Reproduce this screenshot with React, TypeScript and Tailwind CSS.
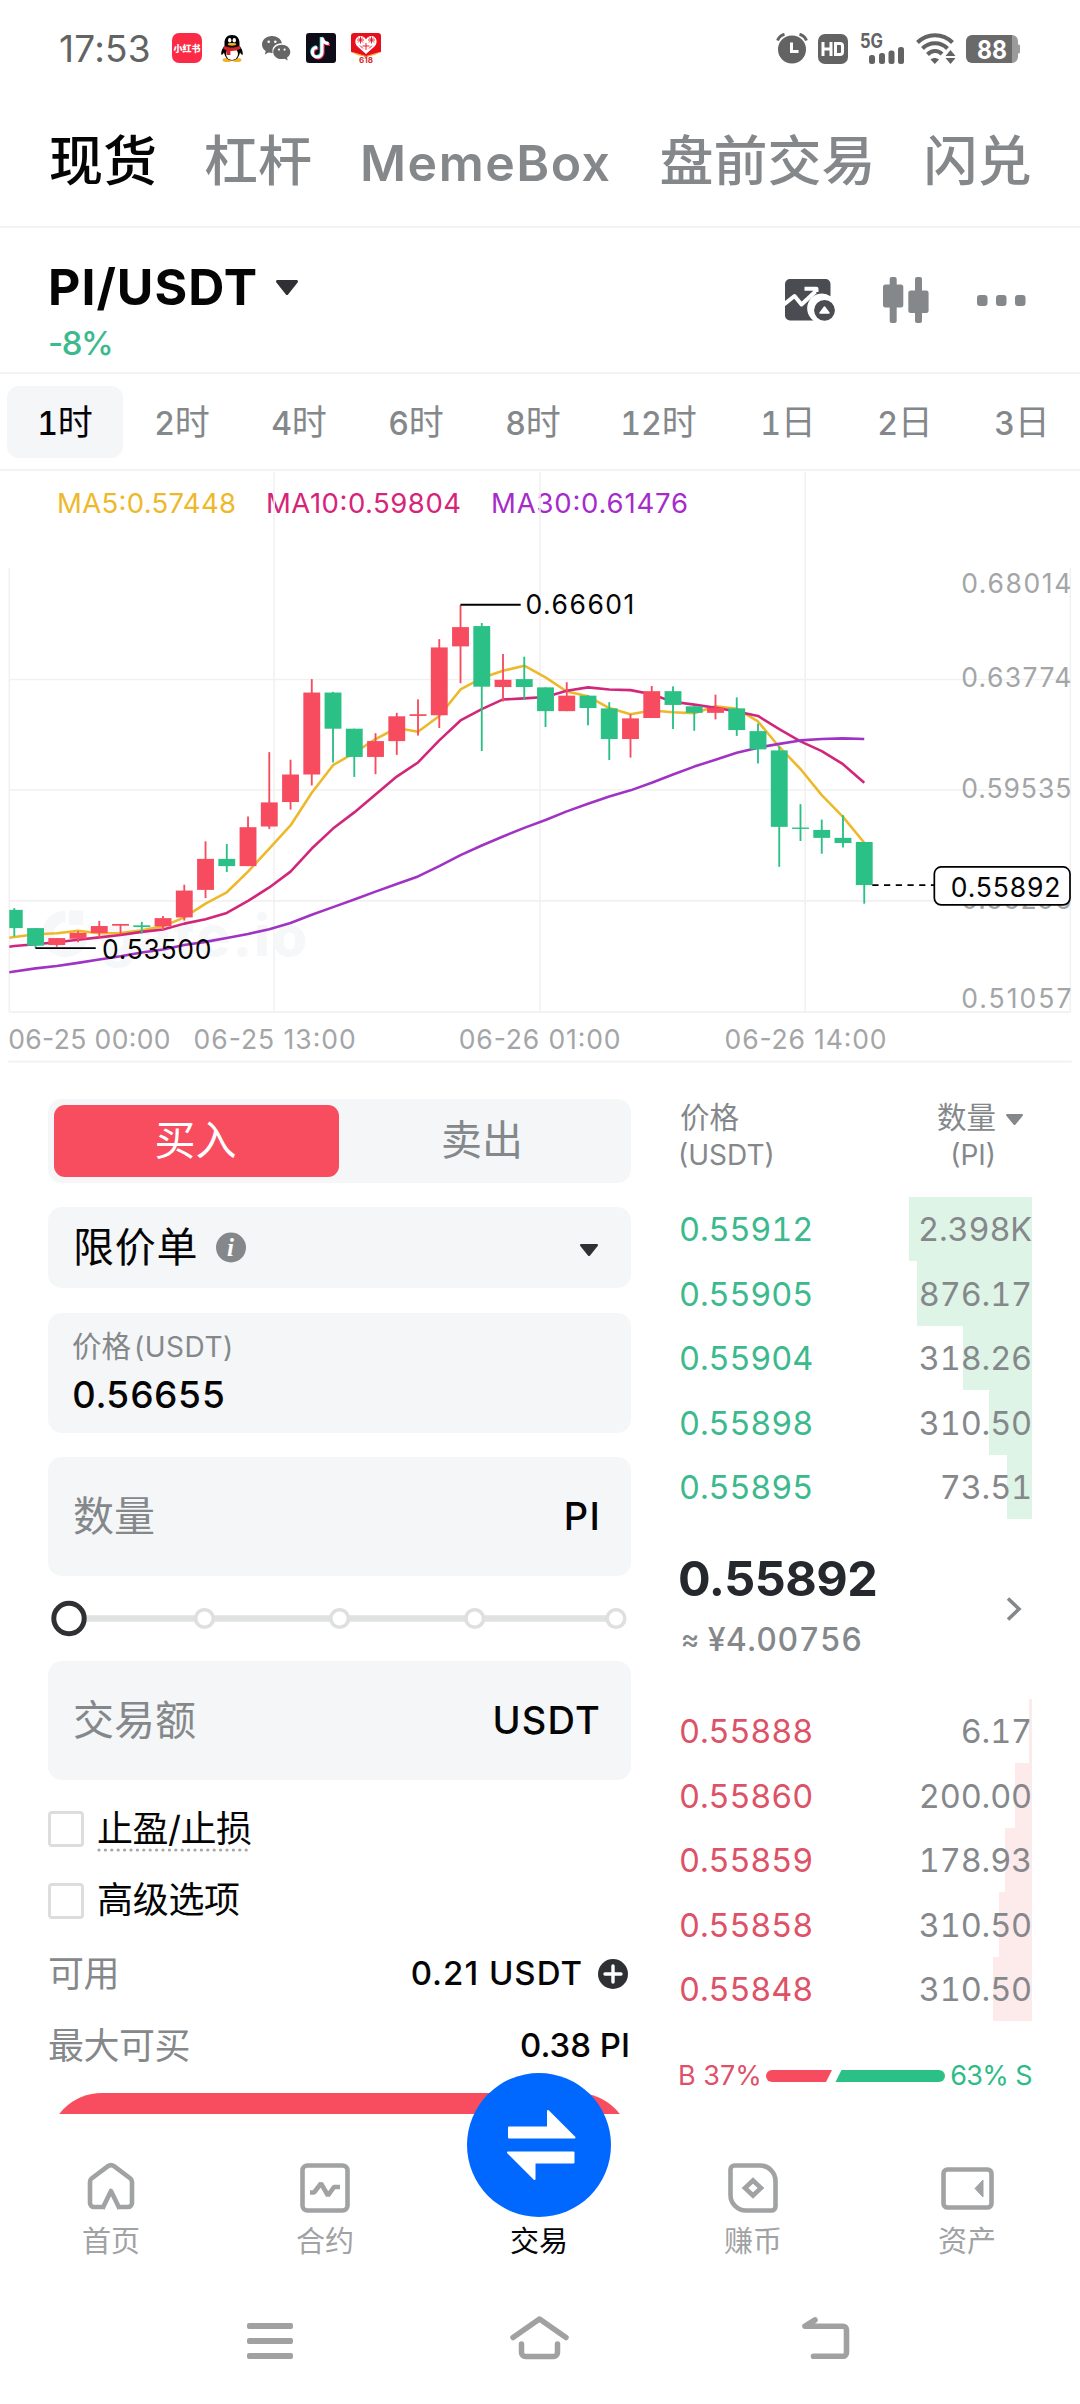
import type { ReactNode } from "react";

const UP = "#f74c60";
const DOWN = "#2bc086";

/* ---------- status bar ---------- */

function StatusBar() {
  return (
    <header className="flex h-[92px] shrink-0 items-start pt-8 text-[#636363]">
      <div className="ml-[59px] w-[113px] text-[37px] leading-[33px] tracking-[0.200px]">17:53</div>
      <div className="flex items-center">
        <div className="mt-px flex h-[30px] w-[30px] items-center justify-center rounded-[7px] bg-[#fb2b45] text-[9px] leading-none font-black whitespace-nowrap text-white">
          小红书
        </div>
        <svg className="ml-[18px]" width="24" height="30" viewBox="0 0 24 30">
          <ellipse cx="7" cy="27" rx="4.500" ry="2" fill="#f5b321" />
          <ellipse cx="17" cy="27" rx="4.500" ry="2" fill="#f5b321" />
          <path d="M12 2C7 2 4.500 5.500 4.500 10v3C2.500 15 1 18 1.200 21.500c1 .8 2-.6 2.800-2C5 24.500 8 27.500 12 27.500s7-3 8-8c.8 1.400 1.800 2.800 2.800 2C23 18 21.500 15 19.500 13v-3C19.500 5.500 17 2 12 2Z" fill="#000" />
          <ellipse cx="12" cy="21" rx="6" ry="6" fill="#fff" />
          <path d="M4 12.500c5 2.800 11 2.800 16 0l.6 3.200c-4 2-7 2.300-10.200 2.200v4H6.500v-4.600L3.400 16Z" fill="#d3222a" />
          <ellipse cx="9.700" cy="7.300" rx="1.700" ry="2.200" fill="#fff" />
          <ellipse cx="14.300" cy="7.300" rx="1.700" ry="2.200" fill="#fff" />
          <ellipse cx="12" cy="11.300" rx="4.300" ry="1.400" fill="#f5b321" />
        </svg>
        <svg className="ml-[17px]" width="30" height="26" viewBox="0 0 30 26">
          <path d="M11 1C5.200 1 1 4.700 1 9.500c0 2.700 1.400 5 3.700 6.600L3.800 19.500l3.800-2c1.100.3 2.200.5 3.400.5h.7C10.200 12 15 8 21 8.300 20 4 16 1 11 1Z" fill="#666" />
          <path d="M20.800 9.700c-4.900 0-8.600 3.200-8.600 7.200s3.700 7.200 8.600 7.200c1 0 2-.1 2.900-.4l3 1.700-.7-2.900c2-1.300 3.300-3.400 3.300-5.600 0-4-3.800-7.200-8.500-7.200Z" fill="#666" />
          <circle cx="7.700" cy="6.800" r="1.300" fill="#fff" />
          <circle cx="14.300" cy="6.800" r="1.300" fill="#fff" />
          <circle cx="18" cy="14.600" r="1.100" fill="#fff" />
          <circle cx="23.600" cy="14.600" r="1.100" fill="#fff" />
        </svg>
        <svg className="ml-[15px]" width="30" height="30" viewBox="0 0 30 30">
          <rect width="30" height="30" rx="3" fill="#0d0c18" />
          <g fill="none" strokeWidth="3">
            <path d="M16 4.500v14.700a4.800 4.800 0 1 1-4.800-4.800M16 4.500c.6 3.700 3 5.800 6.700 6.100" stroke="#35e6df" transform="translate(-.8 -.6)" />
            <path d="M16 4.500v14.700a4.800 4.800 0 1 1-4.800-4.800M16 4.500c.6 3.700 3 5.800 6.700 6.100" stroke="#f6325b" transform="translate(1.100 .9)" />
            <path d="M16 4.500v14.700a4.800 4.800 0 1 1-4.800-4.800M16 4.500c.6 3.700 3 5.800 6.700 6.100" stroke="#fff" />
          </g>
        </svg>
        <svg className="ml-[15px]" width="30" height="30" viewBox="0 0 30 30">
          <path d="M3 0h24a3 3 0 0 1 3 3v16l-15 5L0 19V3a3 3 0 0 1 3-3Z" fill="#e60f1c" />
          <path d="M0 18.500 15 23l15-4.500-6 3.500-9 1.500L6 22Z" fill="#f7b53a" />
          <path d="M15 21 6.500 13.500C2.500 9.500 4.500 3 9.500 3c2.500 0 4.500 1.500 5.500 3.500 1-2 3-3.500 5.500-3.500 5 0 7 6.500 3 10.500Z" fill="#fff" />
          <path d="M9.500 3.500v7M6 7h7M7 4.500l5 5M12 4.500l-5 5M20.500 3.500v7M17 7h7M18 4.500l5 5M23 4.500l-5 5M15 10v7M11.500 13h7M9 12.500l3 3M21 12.500l-3 3" stroke="#e60f1c" strokeWidth=".9" />
          <text x="15" y="29.500" textAnchor="middle" fontSize="8" fontWeight="700" fill="#d02a2a">618</text>
        </svg>
      </div>
      <div className="mt-px mr-[60px] ml-auto flex items-center">
        <svg width="32" height="31" viewBox="0 0 32 31">
          <circle cx="16" cy="16.500" r="14" fill="#636363" />
          <path d="M1.500 7.500C3 4 5.500 2 8.500 1.300M30.500 7.500C29 4 26.500 2 23.500 1.300" stroke="#636363" strokeWidth="3" fill="none" />
          <path d="M15.500 9.500v9h7" stroke="#fff" strokeWidth="3" fill="none" />
        </svg>
        <svg className="ml-2.5" width="30" height="30" viewBox="0 0 30 30">
          <rect width="30" height="30" rx="7" fill="#636363" />
          <path d="M5 8v14M13 8v14M5 15h8M17.500 9.500h4.500a2.500 2.500 0 0 1 2.500 2.500v6a2.500 2.500 0 0 1-2.500 2.500h-4.500Z" stroke="#fff" strokeWidth="3" fill="none" />
        </svg>
        <svg className="ml-3 overflow-visible" width="45" height="31" viewBox="0 0 45 31">
          <text x="0" y="15" fontSize="19.500" fontWeight="700" textLength="23" lengthAdjust="spacingAndGlyphs" fill="#636363">5G</text>
          <g fill="#636363">
            <rect x="9" y="22" width="6" height="9" rx="2.500" />
            <rect x="19" y="20" width="6" height="11" rx="2.500" />
            <rect x="28.500" y="17.500" width="6" height="13.500" rx="2.500" />
            <rect x="38" y="14" width="6" height="17" rx="2.500" />
          </g>
        </svg>
        <svg className="ml-[11px]" width="40" height="31" viewBox="0 0 40 31">
          <g stroke="#636363" strokeWidth="4" fill="none">
            <path d="M1.500 9.500C11-.3 27-.3 36.500 9.500" />
            <path d="M6.500 15.500c7-7 18-7 25 0" />
            <path d="M11.500 21.500c4.500-4.500 10.500-4.500 14.500-.5" />
          </g>
          <path d="M14.500 26.500c2.500-2 6-2 8.500 0L18.800 31Z" fill="#636363" />
          <path d="M34.500 17l5 6h-10ZM34.500 31l5-6h-10Z" fill="#636363" />
        </svg>
        <svg className="ml-[10px]" width="54" height="28" viewBox="0 0 54 28">
          <path d="M46 0a6 6 0 0 1 6 6v3.500h1a1.500 1.500 0 0 1 1 1.500v6a1.500 1.500 0 0 1-1 1.500h-1V22a6 6 0 0 1-6 6Z" fill="#9b9b9b" />
          <path d="M6 0h40v28H6a6 6 0 0 1-6-6V6a6 6 0 0 1 6-6Z" fill="#6a6a6a" />
          <text x="11" y="23.500" fontSize="26" fontWeight="700" textLength="30" lengthAdjust="spacingAndGlyphs" fill="#fff">88</text>
        </svg>
      </div>
    </header>
  );
}

/* ---------- top navigation and pair title ---------- */

function MarketTabs() {
  return (
    <nav className="flex h-[136px] shrink-0 items-baseline gap-12 border-b-2 border-[#f3f3f4] pt-10 pl-[49px] text-[54px] leading-[59px] font-medium whitespace-nowrap text-[#85888b]">
      <span className="w-[107px] text-[#050505]">现货</span>
      <span>杠杆</span>
      <span className="text-[50px] font-semibold tracking-[1.500px]">MemeBox</span>
      <span>盘前交易</span>
      <span>闪兑</span>
    </nav>
  );
}

function Caret({ className, width, height }: { className: string; width: number; height: number }) {
  return (
    <svg className={className} width={width} height={height} viewBox="0 0 22 15" preserveAspectRatio="none">
      <path d="M1.500 0h19c1.300 0 1.900 1.400 1.100 2.400l-9.300 11.900a1.600 1.600 0 0 1-2.600 0L.4 2.400C-.4 1.400.2 0 1.500 0Z" fill="currentColor" />
    </svg>
  );
}

function PairHeader() {
  return (
    <section className="flex h-[146px] shrink-0 justify-between border-b-2 border-[#f3f3f4] pr-[54px] pl-12">
      <div className="pt-[29px]">
        <div className="flex items-center gap-[18px]">
          <h1 className="text-[50px] leading-[60px] font-bold tracking-[1px] text-[#050505]">PI/USDT</h1>
          <Caret className="text-[#2f3033]" width={22} height={15} />
        </div>
        <div className="text-[33px] leading-[52px] font-medium tracking-[-1.500px] text-[#3cb98d]">-8%</div>
      </div>
      <div className="flex items-center gap-12">
        <svg width="50" height="42" viewBox="0 0 50 42">
          <path d="M5 0h35.500a5 5 0 0 1 5 5v12.200A14 14 0 0 0 28.500 41.500H5a5 5 0 0 1-5-5V5a5 5 0 0 1 5-5Z" fill="#4a4c52" />
          <path d="M-1 25.500 9.500 17l7 8.500L30.500 12.500M19.500 9.700H31.500V13" fill="none" stroke="#fff" strokeWidth="4" strokeLinejoin="round" />
          <circle cx="39.500" cy="31.300" r="10.400" fill="#4a4c52" />
          <path d="m39.500 28 4.500 6H35Z" fill="#fff" stroke="#fff" strokeWidth="1.500" strokeLinejoin="round" />
        </svg>
        <svg width="46" height="46" viewBox="0 0 46 46" fill="#85888b">
          <rect x="6.700" width="7" height="46" rx="2" />
          <rect y="7.500" width="20.300" height="23" rx="2.500" />
          <rect x="32" width="7" height="46" rx="2" />
          <rect x="25.300" y="13.500" width="20.300" height="22.500" rx="2.500" />
        </svg>
        <svg width="49" height="11" viewBox="0 0 49 11" fill="#85888b">
          <rect x="0" width="10.500" height="11" rx="3" />
          <rect x="19" width="10.500" height="11" rx="3" />
          <rect x="38" width="10.500" height="11" rx="3" />
        </svg>
      </div>
    </section>
  );
}

function IntervalTab({ n, unit, active, wide }: { n: string; unit: string; active?: boolean; wide?: boolean }) {
  return (
    <div
      className={
        "flex h-[72px] shrink-0 items-baseline justify-center rounded-[12px] text-[32px] leading-[75px] font-medium tabular-nums " +
        (wide ? "w-[137px] " : "w-[116px] ") +
        (active ? "bg-[#f4f6f7] text-[#050505]" : "text-[#85888b]")
      }
    >
      <span className={wide ? "-ml-1" : ""}>{n}</span>
      <span className="text-[35px] leading-[72px] font-normal">{unit}</span>
    </div>
  );
}

function Intervals() {
  return (
    <section className="flex h-[97px] shrink-0 items-center gap-px overflow-hidden border-b-2 border-[#f3f3f4] pl-[7px]">
      <IntervalTab n="1" unit="时" active />
      <IntervalTab n="2" unit="时" />
      <IntervalTab n="4" unit="时" />
      <IntervalTab n="6" unit="时" />
      <IntervalTab n="8" unit="时" />
      <IntervalTab n="12" unit="时" wide />
      <IntervalTab n="1" unit="日" />
      <IntervalTab n="2" unit="日" />
      <IntervalTab n="3" unit="日" />
    </section>
  );
}

/* ---------- candlestick chart ---------- */

// high, body top, body bottom, low, rising (1) or falling (0)
const CANDLES: number[][] = [
  [1098, 1103, 1156, 1180, 0], [1156, 1156, 1207, 1214, 0], [1185, 1185, 1205, 1210, 1], [1165, 1170, 1187, 1197, 1],
  [1135, 1150, 1170, 1184, 1], [1144, 1144, 1149, 1175, 1], [1138, 1148, 1153, 1172, 0], [1121, 1127, 1151, 1163, 1],
  [1030, 1047, 1125, 1134, 1], [904, 955, 1045, 1069, 1], [912, 955, 976, 993, 0], [832, 863, 976, 976, 1],
  [645, 791, 861, 868, 1], [667, 710, 790, 812, 1], [433, 472, 710, 742, 1], [470, 472, 577, 675, 0],
  [577, 577, 659, 717, 0], [590, 613, 659, 709, 1], [531, 541, 613, 653, 1], [492, 535, 540, 597, 1],
  [317, 341, 538, 575, 1], [218, 282, 338, 445, 1], [270, 279, 455, 642, 0], [360, 435, 456, 498, 1],
  [368, 433, 456, 492, 0], [457, 457, 526, 572, 0], [442, 481, 526, 526, 1], [480, 481, 517, 567, 0],
  [500, 518, 607, 668, 0], [535, 547, 607, 661, 1], [453, 468, 546, 546, 1], [454, 468, 508, 578, 0],
  [510, 512, 531, 583, 0], [478, 516, 531, 550, 1], [486, 518, 581, 598, 0], [562, 584, 637, 678, 0],
  [628, 640, 862, 978, 0], [796, 864, 868, 903, 0], [841, 871, 894, 940, 0], [828, 894, 909, 922, 0],
  [906, 906, 1031, 1085, 0],
];

const MA5 = [1182, 1174, 1171, 1164, 1171, 1170, 1162, 1151, 1125, 1085, 1052, 992, 925, 858, 763, 683, 647, 607, 575, 586, 540, 463, 430, 409, 394, 428, 469, 483, 517, 535, 524, 529, 532, 512, 519, 556, 630, 694, 770, 833, 908];
const MA10 = [1208, 1203, 1197, 1190, 1183, 1176, 1167, 1160, 1143, 1130, 1112, 1077, 1038, 992, 925, 867, 820, 768, 716, 675, 611, 553, 520, 492, 489, 485, 467, 457, 463, 465, 477, 499, 507, 516, 527, 540, 578, 614, 642, 680, 734];
const MA30 = [1282, 1273, 1266, 1257, 1247, 1238, 1227, 1218, 1205, 1196, 1185, 1173, 1159, 1141, 1117, 1095, 1073, 1050, 1028, 1006, 976, 944, 916, 890, 865, 842, 817, 795, 774, 756, 734, 710, 687, 667, 647, 632, 621, 611, 607, 605, 607];

const cx = (i: number) => 41.5 + i * 61.7;
const line = (ys: number[]) => `27,${ys[0] + 2} ` + ys.map((y, i) => `${cx(i)},${y}`).join(" ");

function Chart() {
  return (
    <section className="flex h-[592px] shrink-0 flex-col">
      <div className="flex h-[59px] items-center pt-[13px] pl-[57px] text-[27.500px]">
        <svg width="178" height="40" viewBox="0 0 178 40"><text x="0" y="26" textLength="179" fill="#edb92b">MA5:0.57448</text></svg>
        <svg className="ml-[31px]" width="196" height="40" viewBox="0 0 196 40"><text x="0" y="26" textLength="195" fill="#d6247a">MA10:0.59804</text></svg>
        <svg className="ml-[29px]" width="198" height="40" viewBox="0 0 198 40"><text x="0" y="26" textLength="197" fill="#a52cc9">MA30:0.61476</text></svg>
      </div>
      <svg className="-mt-[59px] shrink-0" width="1080" height="592" viewBox="0 -171.300 3136 1719" preserveAspectRatio="none">
        <g stroke="#f1f1f2" strokeWidth="4.500" fill="none">
          <path d="M27 110V1400M796-168V1400M1568-168V1400M2338-168V1400M3108 110V1400" />
          <path d="M27 434H3108M27 755H3108M27 1077H3108M27 1400H3108" />
        </g>
        <g fill="#f6f7f8">
          <path d="M190 1105a68 68 0 1 0 68 68h-34a34 34 0 1 1-34-34Z" />
          <rect x="200" y="1105" width="42" height="42" />
          <text x="290" y="1238" fontSize="165" fontWeight="800" textLength="602">gate.io</text>
        </g>
        {[[MA5, "#edb92b"], [MA10, "#d0277b"], [MA30, "#a033c4"]].map(([ys, c]) => (
          <polyline key={c as string} points={line(ys as number[])} fill="none" stroke={c as string} strokeWidth="7.500" strokeLinejoin="round" />
        ))}
        {CANDLES.map(([h, t, b, l, r], i) => {
          const x = cx(i);
          const left = Math.max(27, x - 24.5);
          return (
            <g key={i} fill={r ? UP : DOWN}>
              <rect x={x - 2.7} y={h} width="5.400" height={l - h} />
              <rect x={left} y={t} width={x + 24.5 - left} height={Math.max(b - t, 4)} />
            </g>
          );
        })}
        <path d="M1337 217H1512M103 1214H278" stroke="#000" strokeWidth="5.500" />
        <g fontSize="77">
          <g fill="#050505">
            <text x="1526" y="244" textLength="316">0.66601</text>
            <text x="296" y="1246" textLength="318">0.53500</text>
          </g>
          <g fill="#a3a5a7">
            <text x="2791" y="183" textLength="320">0.68014</text>
            <text x="2791" y="457" textLength="320">0.63774</text>
            <text x="2791" y="778" textLength="320">0.59535</text>
            <text x="2791" y="1100" textLength="320">0.55296</text>
            <text x="2791" y="1389" textLength="320">0.51057</text>
            <text x="24" y="1507" textLength="471">06-25 00:00</text>
            <text x="562" y="1507" textLength="471">06-25 13:00</text>
            <text x="1332" y="1507" textLength="470">06-26 01:00</text>
            <text x="2104" y="1507" textLength="470">06-26 14:00</text>
          </g>
          <path d="M2533 1031H2712" stroke="#000" strokeWidth="5" strokeDasharray="18 16" />
          <rect x="2713" y="978.500" width="394" height="110" rx="20" fill="#fff" stroke="#000" strokeWidth="5" />
          <text x="2761" y="1066" textLength="318" fill="#050505">0.55892</text>
        </g>
        <path d="M24 1544H3112" stroke="#f1f1f2" strokeWidth="5" />
      </svg>
    </section>
  );
}

/* ---------- order form ---------- */

function Field({ label, unit }: { label: string; unit: string }) {
  return (
    <div className="flex h-[119px] shrink-0 items-center justify-between rounded-[14px] bg-[#f4f6f7] pr-[30px] pl-[25px]">
      <span className="text-[41px] text-[#85888b]">{label}</span>
      <span className="text-[38px] font-medium tracking-[1.200px] text-[#050505]">{unit}</span>
    </div>
  );
}

function Slider() {
  return (
    <svg className="h-[85px] w-[583px] shrink-0" viewBox="0 0 583 85">
      <path d="M22 42.500H568" stroke="#e0e1e1" strokeWidth="6.500" />
      <g fill="#fff" stroke="#dedfdf" strokeWidth="3.600">
        <circle cx="156.500" cy="42.500" r="8.800" />
        <circle cx="291.600" cy="42.500" r="8.800" />
        <circle cx="426.700" cy="42.500" r="8.800" />
        <circle cx="568" cy="42.500" r="8.800" />
      </g>
      <circle cx="21" cy="42.500" r="15.200" fill="#fff" stroke="#2f3033" strokeWidth="5" />
    </svg>
  );
}

function CheckRow({ className, children }: { className: string; children: ReactNode }) {
  return (
    <div className={"flex h-9 shrink-0 items-center gap-[13px] text-[36px] text-[#050505] " + className}>
      <span className="h-9 w-9 rounded-[4px] border-[3px] border-[#dcdede]" />
      {children}
    </div>
  );
}

function OrderForm() {
  return (
    <section className="flex w-[583px] flex-col pt-9">
      <div className="flex h-[84px] shrink-0 items-center rounded-[14px] bg-[#f4f6f7] px-1.5 text-[41px]">
        <div className="flex h-[72px] w-[285px] items-center justify-center rounded-[11px] bg-[#f84c5f] pr-0.5 text-white">买入</div>
        <div className="flex flex-1 items-center justify-center text-[#85888b]">卖出</div>
      </div>

      <div className="mt-6 flex h-[81px] shrink-0 items-center rounded-[14px] bg-[#f4f6f7] pr-[33px] pl-[25px]">
        <span className="text-[41px] tracking-[0.800px] text-[#050505]">限价单</span>
        <svg className="ml-[18px]" width="30" height="31" viewBox="0 0 30 31">
          <circle cx="15" cy="15.500" r="15" fill="#85888b" />
          <text x="14.500" y="24" textAnchor="middle" fontFamily="Liberation Serif, serif" fontStyle="italic" fontWeight="700" fontSize="25" fill="#fff">i</text>
        </svg>
        <Caret className="mt-1 ml-auto text-[#2f3033]" width={18} height={12} />
      </div>

      <div className="mt-[25px] flex h-[120px] shrink-0 flex-col rounded-[14px] bg-[#f4f6f7] pt-[14px] pl-6">
        <div className="flex items-baseline text-[#85888b]">
          <span className="w-[62px] text-[29.500px] leading-[38px]">价格</span>
          <span className="text-[28px] leading-[38px] tracking-[0.500px]">(USDT)</span>
        </div>
        <span className="text-[37px] leading-[57px] font-medium tabular-nums text-[#050505]">0.56655</span>
      </div>

      <div className="mt-6 flex flex-col">
        <Field label="数量" unit="PI" />
        <Slider />
        <Field label="交易额" unit="USDT" />
      </div>

      <CheckRow className="mt-[31px]">
        <span className="relative leading-9 tracking-[-0.500px]">
          止盈/止损
          <svg className="absolute top-[37px] left-0" width="156" height="4" viewBox="0 0 156 4">
            <path d="M2 2H155" stroke="#a3a5a7" strokeWidth="3.200" strokeLinecap="round" strokeDasharray="0 6.400" />
          </svg>
        </span>
      </CheckRow>
      <CheckRow className="mt-9">
        <span className="mb-[3px] leading-9 tracking-[-0.300px]">高级选项</span>
      </CheckRow>

      <div className="mt-[37px] flex h-9 shrink-0 items-center">
        <span className="text-[36px] leading-9 tracking-[-0.500px] text-[#85888b]">可用</span>
        <span className="ml-auto text-[33px] font-medium tracking-[1px] text-[#050505]">0.21 USDT</span>
        <svg className="mr-[3px] ml-[15px]" width="30" height="30" viewBox="0 0 30 30">
          <circle cx="15" cy="15" r="15" fill="#2f3033" />
          <path d="M7 15h16M15 7v16" stroke="#fff" strokeWidth="3.400" strokeLinecap="round" />
        </svg>
      </div>
      <div className="mt-9 flex h-9 shrink-0 items-center justify-between">
        <span className="text-[36px] leading-9 tracking-[-0.500px] text-[#85888b]">最大可买</span>
        <span className="pr-px text-[33px] font-medium text-[#050505]">0.38 PI</span>
      </div>

      <div className="mt-[29px] h-[108px] shrink-0 rounded-[54px] bg-[#f84c5f]" />
    </section>
  );
}

/* ---------- order book ---------- */

type Level = { price: string; amount: string; depth: number };

const ASKS: Level[] = [
  { price: "0.55912", amount: "2.398K", depth: 123 },
  { price: "0.55905", amount: "876.17", depth: 115 },
  { price: "0.55904", amount: "318.26", depth: 69 },
  { price: "0.55898", amount: "310.50", depth: 43 },
  { price: "0.55895", amount: "73.51", depth: 25 },
];

const BIDS: Level[] = [
  { price: "0.55888", amount: "6.17", depth: 3 },
  { price: "0.55860", amount: "200.00", depth: 17 },
  { price: "0.55859", amount: "178.93", depth: 27 },
  { price: "0.55858", amount: "310.50", depth: 33 },
  { price: "0.55848", amount: "310.50", depth: 39 },
];

function Levels({ rows, bar, text }: { rows: Level[]; bar: string; text: string }) {
  return (
    <div className="flex h-[322px] shrink-0 flex-col text-[32.500px] tracking-[-0.150px] tabular-nums">
      {rows.map((r) => (
        <div key={r.price} className="relative flex flex-1 items-center justify-between pt-[3px]">
          <div className={"absolute inset-y-0 right-0 " + bar} style={{ width: r.depth }} />
          <span className={"relative -ml-px " + text}>{r.price}</span>
          <span className="relative text-[#85888b]">{r.amount}</span>
        </div>
      ))}
    </div>
  );
}

function OrderBook() {
  return (
    <section className="flex w-[352px] flex-col pt-[35px]">
      <div className="flex h-[76px] shrink-0 justify-between text-[28px] leading-[38px] text-[#85888b]">
        <div>
          <div className="text-[29.500px]">价格</div>
          <div className="-ml-0.5">(USDT)</div>
        </div>
        <div className="flex">
          <div className="text-right">
            <div className="text-[29.500px]">数量</div>
            <div>(PI)</div>
          </div>
          <Caret className="mt-4 mr-[9px] ml-2.5 text-[#85888b]" width={17} height={11} />
        </div>
      </div>

      <div className="mt-[23px] flex flex-col">
        <Levels rows={ASKS} bar="bg-[#def4e7]" text="text-[#3cb98d]" />
        <div className="flex h-[180px] shrink-0 items-center justify-between">
          <div className="-ml-0.5">
            <div className="text-[48.500px] leading-[60px] font-bold tracking-[-0.500px] text-[#25282d]">0.55892</div>
            <div className="flex items-center gap-2 text-[32px] leading-[61px] font-medium tracking-[0.500px] tabular-nums text-[#85888b]">
              <span className="ml-[3px] text-[28px]">≈</span>
              <span>¥4.00756</span>
            </div>
          </div>
          <svg className="mr-2.5" width="16" height="26" viewBox="0 0 16 26">
            <path d="M2 2.500 13 13 2 23.500" fill="none" stroke="#85888b" strokeWidth="3.600" />
          </svg>
        </div>
        <Levels rows={BIDS} bar="bg-[#fdeaeb]" text="text-[#dd5266]" />
      </div>

      <div className="mt-[30px] flex h-[50px] shrink-0 items-center justify-between text-[27px]">
        <span className="-ml-0.5 text-[#e0506a]">B 37%</span>
        <svg width="179" height="12" viewBox="0 0 179 12">
          <path d="M6 0H66L60 12H6A6 6 0 0 1 6 0Z" fill={UP} />
          <path d="M75.500 0H173a6 6 0 0 1 0 12H69.500Z" fill={DOWN} />
        </svg>
        <span className="tracking-[-0.600px] text-[#2ebb87]">63% S</span>
      </div>
    </section>
  );
}

/* ---------- bottom bars ---------- */

function BottomTab({ label, active, children }: { label: string; active?: boolean; children: ReactNode }) {
  return (
    <div className={"flex w-[214px] flex-col items-center " + (active ? "text-[#050505]" : "text-[#a0a2a4]")}>
      <div className="flex h-[107px] flex-col items-center justify-end">{children}</div>
      <span className="text-[29px] leading-[42px]">{label}</span>
    </div>
  );
}

function BottomNav() {
  return (
    <nav className="relative flex h-[166px] shrink-0 bg-white pl-1">
      <BottomTab label="首页">
        <svg className="mb-2" width="50" height="52" viewBox="0 0 50 52" fill="none" stroke="currentColor" strokeWidth="4.600">
          <path d="M19 46H8a4 4 0 0 1-4-4V21a5 5 0 0 1 1.600-3.600L22 5.200a5 5 0 0 1 6 0l16.400 12.200A5 5 0 0 1 46 21v21a4 4 0 0 1-4 4H31" />
          <path d="M16.500 47.500 25 30l8.500 17.500" strokeLinejoin="round" />
        </svg>
      </BottomTab>
      <BottomTab label="合约">
        <svg className="mb-[7px]" width="52" height="52" viewBox="0 0 52 52" fill="none" stroke="currentColor" strokeWidth="4.600">
          <rect x="3.500" y="3.500" width="45" height="45" rx="5" />
          <path d="M11 30.500h4l7-9 7 12 6-8.500h6" strokeLinejoin="bevel" />
        </svg>
      </BottomTab>
      <BottomTab label="交易" active>
        <svg className="mb-1 shrink-0" width="144" height="144" viewBox="0 0 144 144">
          <circle cx="72" cy="72" r="72" fill="#0068ff" />
          <g fill="#fff" stroke="#fff" strokeWidth="2" strokeLinejoin="round">
            <path d="M42 54.500H81V38L107.500 64.500H42Z" />
            <path d="M106.500 89.500H67.500V106L41 79.500H106.500Z" />
          </g>
        </svg>
      </BottomTab>
      <BottomTab label="赚币">
        <svg className="mb-[7px]" width="52" height="52" viewBox="0 0 52 52" fill="none" stroke="currentColor" strokeWidth="4.600">
          <path d="M7.500 3.500H33A15.500 15.500 0 0 1 48.500 19v25.500a4 4 0 0 1-4 4H19A15.500 15.500 0 0 1 3.500 33V7.500a4 4 0 0 1 4-4Z" />
          <path d="m26 18.500 8 7.500-8 7.500-8-7.500Z" />
        </svg>
      </BottomTab>
      <BottomTab label="资产">
        <svg className="mb-[11px]" width="54" height="44" viewBox="0 0 54 44" fill="none" stroke="currentColor" strokeWidth="4.600">
          <rect x="3.500" y="3.500" width="48" height="38" rx="4" />
          <path d="m43 14-8 8.500 8 8.500Z" strokeWidth="1" fill="currentColor" />
        </svg>
      </BottomTab>
    </nav>
  );
}

function SystemNav() {
  return (
    <div className="flex flex-1 items-start bg-white pt-9 pl-[247px]">
      <svg width="46" height="44" viewBox="0 0 46 44" fill="#a1a1a1">
        <rect y="7" width="46" height="6" rx="2" />
        <rect y="22" width="46" height="6" rx="2" />
        <rect y="37" width="46" height="6" rx="2" />
      </svg>
      <svg className="ml-[217px]" width="59" height="44" viewBox="0 0 59 44" fill="none" stroke="#a1a1a1" strokeWidth="5.500" strokeLinecap="round" strokeLinejoin="round">
        <path d="M3 21.500 29.500 3 56 21.500" />
        <path d="M11.500 28v8.500a4 4 0 0 0 4 4h28a4 4 0 0 0 4-4V28" />
      </svg>
      <svg className="ml-[232px]" width="50" height="44" viewBox="0 0 50 44" fill="none" stroke="#a1a1a1" strokeWidth="5.600" strokeLinecap="round" strokeLinejoin="round">
        <path d="M14 4 4 10.200H42a3.500 3.500 0 0 1 3.500 3.500v23a3.500 3.500 0 0 1-3.500 3.500H12.500" />
      </svg>
    </div>
  );
}

export default function App() {
  return (
    <div className="flex h-[2404px] w-[1080px] flex-col overflow-hidden bg-white font-['Inter','Noto_Sans_CJK_SC',sans-serif]">
      <StatusBar />
      <MarketTabs />
      <PairHeader />
      <Intervals />
      <Chart />
      <main className="flex h-[1051px] shrink-0 gap-[49px] overflow-hidden px-12">
        <OrderForm />
        <OrderBook />
      </main>
      <BottomNav />
      <SystemNav />
    </div>
  );
}
